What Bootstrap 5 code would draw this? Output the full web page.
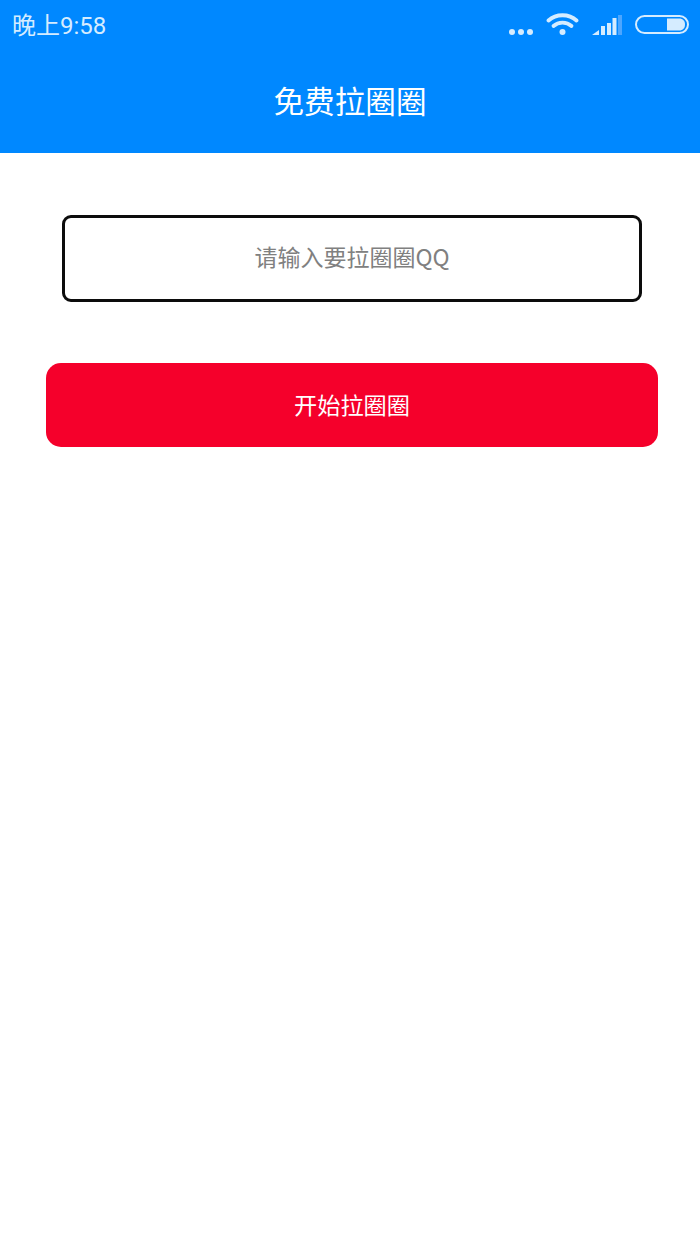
<!DOCTYPE html>
<html lang="zh">
<head>
  <meta charset="UTF-8" />
  <title>免费拉圈圈</title>
  <meta name="viewport" content="width=device-width, initial-scale=1" />
  <link href="https://cdn.jsdelivr.net/npm/bootstrap@5.3.3/dist/css/bootstrap.min.css" rel="stylesheet" />
  <style>
    body { font-family: "Roboto", "Noto Sans CJK SC", sans-serif; background: #fff; }
    .app-head { background: #0088ff; height: 153px; color: #fff; }
    .status-row { height: 52px; padding: 0 11px 0 12px; }
    .status-time { font-size: 24px; line-height: 1; color: #d5ecff; }
    .status-icons { gap: 13px; }
    .status-icons svg { display: block; }
    .head-title { font-size: 30.6px; line-height: 1; height: 101px; padding-bottom: 5px; font-family: "Noto Sans CJK SC", sans-serif; }
    .page-form { padding: 62px 42px 0 46px; }
    .qq-field { display: block; width: 580px; height: 87px; margin: 0 0 61px 16px; padding: 0 12px 6px; border: 3px solid #0c0c0c; border-radius: 9px; font-size: 23px; text-align: center; color: #333; font-family: "Noto Sans CJK SC", sans-serif; }
    .qq-field::placeholder { color: #808080; opacity: 1; }
    .qq-field:focus { border-color: #0c0c0c; box-shadow: none; }
    .start-btn { display: block; width: 612px; height: 84px; padding: 0 12px 2px; background: #f5002b; border: 0; border-radius: 15px; color: #fff; font-size: 23.2px; font-family: "Noto Sans CJK SC", sans-serif; }
    .start-btn:hover, .start-btn:active { background: #f5002b !important; color: #fff !important; }
  </style>
</head>
<body>

<header class="app-head">
  <div class="status-row d-flex justify-content-between align-items-center">
    <span class="status-time">晚上9:58</span>
    <div class="status-icons d-flex align-items-center">
      <svg width="24" height="26" viewBox="0 0 24 26" fill="#d5ecff">
        <circle cx="3" cy="19" r="3" /><circle cx="12" cy="19" r="3" /><circle cx="21" cy="19" r="3" />
      </svg>
      <svg width="33" height="26" viewBox="0 0 33 26" fill="none" stroke="#d5ecff" stroke-width="3.8" stroke-linecap="round">
        <path d="M2.500 7.500C10 0.500 23 0.500 30.500 7.500" />
        <path d="M7.500 13C12.500 8.500 20.500 8.500 25.500 13" />
        <circle cx="16.500" cy="19" r="3" fill="#d5ecff" stroke="none" />
      </svg>
      <svg width="30" height="26" viewBox="0 0 30 26">
        <path d="M0 22L7 17V22Z" fill="#d5ecff" />
        <rect x="9" y="13" width="4" height="9" fill="#d5ecff" />
        <rect x="15" y="10" width="4" height="12" fill="#d5ecff" />
        <rect x="20.500" y="5" width="4" height="17" fill="#d5ecff" />
        <rect x="26" y="2" width="4" height="20" fill="#4da6ff" />
      </svg>
      <svg width="54" height="26" viewBox="0 0 54 26">
        <rect x="1" y="3" width="52" height="17" rx="8.500" fill="none" stroke="#d5ecff" stroke-width="2" />
        <path d="M32 5.500H44C48 5.500 50 8 50 11.500C50 15 48 17.500 44 17.500H32Z" fill="#d5ecff" />
      </svg>
    </div>
  </div>
  <div class="head-title d-flex justify-content-center align-items-center">免费拉圈圈</div>
</header>

<main class="page-form">
  <input type="text" class="form-control qq-field" placeholder="请输入要拉圈圈QQ" />
  <button type="button" class="btn start-btn">开始拉圈圈</button>
</main>

<script src="https://cdn.jsdelivr.net/npm/bootstrap@5.3.3/dist/js/bootstrap.bundle.min.js"></script>
</body>
</html>
